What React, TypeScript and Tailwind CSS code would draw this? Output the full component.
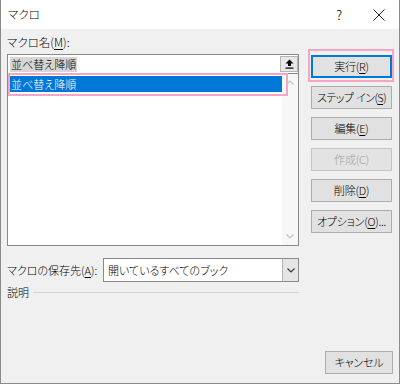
import React from "react";

const font = "font-['Noto_Sans_CJK_JP','Noto_Sans',sans-serif] [font-feature-settings:'palt'] whitespace-nowrap font-light";

function Btn({ children, disabled, def, tight }: { children: React.ReactNode; disabled?: boolean; def?: boolean; tight?: boolean }) {
  return (
    <div
      className={
        "h-[23px] w-full flex items-center justify-center text-[11px] leading-none " +
        (tight ? "tracking-[-0.6px] " : "tracking-[-0.2px] ") +
        (disabled
          ? "bg-[#e3e3e3] border border-[#c4c4c4] text-[#a0a0a0]"
          : def
          ? "bg-[#e1e1e1] border-2 border-[#0078d7] text-black"
          : "bg-[#e1e1e1] border border-[#adadad] text-black")
      }
    >
      {children}
    </div>
  );
}

const U = ({ children }: { children: React.ReactNode }) => <span className="underline underline-offset-2">{children}</span>;

export default function App() {
  return (
    <div className={"w-[400px] h-[384px] flex flex-col bg-[#f0f0f0] border-l border-r border-b border-[#8a8a8a] text-black " + font}>
      {/* title bar */}
      <div className="h-[29px] bg-white flex items-center pl-[7px] pr-[14px] shrink-0">
        <span className="text-[11.5px] leading-none">マクロ</span>
        <div className="flex-1" />
        <span className="text-[13px] leading-none mr-[31px]">?</span>
        <svg width="12" height="12" viewBox="0 0 12 12">
          <path d="M0.5 0.5 L11.5 11.5 M11.5 0.5 L0.5 11.5" stroke="#222" strokeWidth="1" />
        </svg>
      </div>

      {/* body */}
      <div className="flex-1 flex flex-col px-[6px] pt-[6px] pb-[9px]">
        <div className="flex gap-[12px]">
          {/* left */}
          <div className="w-[292px] flex flex-col">
            <div className="h-[14px] text-[11.5px] leading-[14px]">マクロ名(<U>M</U>):</div>
            {/* input */}
            <div className="mt-[5px] h-[20px] bg-white border border-[#8a8a8a] flex items-center pl-[2px]">
              <span className="bg-[#d6d6d6] text-[11px] leading-[15px] px-[1px]">並べ替え降順</span>
              <div className="flex-1" />
              <div className="w-[18px] h-[16px] bg-[#e8e8e8] border border-[#b5b5b5] flex items-center justify-center">
                <svg width="9" height="10" viewBox="0 0 9 10">
                  <path d="M4.5 0.5 L8.5 4.5 L6 4.5 L6 7 L3 7 L3 4.5 L0.5 4.5 Z" fill="#000" />
                  <rect x="0.5" y="8.5" width="8" height="1.2" fill="#000" />
                </svg>
              </div>
            </div>
            {/* list */}
            <div className="relative h-[172px] bg-white border-l border-r border-b border-[#8a8a8a] flex">
              <div className="flex-1 pt-[2px] pl-[2px]">
                <div className="h-[16px] bg-[#0078d7] text-white text-[11px] leading-[16px] pl-[1px]">並べ替え降順</div>
              </div>
              <div className="w-[16px] bg-[#f7f7f7] flex flex-col items-center justify-between py-[6px]">
                <svg width="8" height="5" viewBox="0 0 8 5">
                  <path d="M0.5 4.5 L4 1 L7.5 4.5" stroke="#c2c2c2" strokeWidth="1.2" fill="none" />
                </svg>
                <svg width="8" height="5" viewBox="0 0 8 5">
                  <path d="M0.5 0.5 L4 4 L7.5 0.5" stroke="#c2c2c2" strokeWidth="1.2" fill="none" />
                </svg>
              </div>
              <div className="absolute left-0 top-[-1px] w-[280px] h-[23px] border-2 border-[#f3a6c6] pointer-events-none" />
            </div>
            {/* save location */}
            <div className="mt-[12px] h-[24px] flex items-center">
              <span className="w-[96px] text-[11px] leading-none">マクロの保存先(<U>A</U>):</span>
              <div className="flex-1 h-[24px] bg-white border border-[#8a8a8a] flex items-center">
                <span className="pl-[4px] text-[11px] leading-none flex-1">開いているすべてのブック</span>
                <div className="w-[16px] h-full bg-[#e5e5e5] border-l border-[#b5b5b5] flex items-center justify-center">
                  <svg width="8" height="5" viewBox="0 0 8 5">
                    <path d="M0.5 0.5 L4 4 L7.5 0.5" stroke="#333" strokeWidth="1.1" fill="none" />
                  </svg>
                </div>
              </div>
            </div>
            <div className="mt-[3px] h-[14px] flex items-center">
              <span className="text-[11px] leading-none">説明</span>
              <div className="flex-1 ml-[4px] h-px bg-[#d5d5d5]" />
            </div>
          </div>

          {/* right */}
          <div className="w-[81px] pt-[20px] flex flex-col gap-[8px]">
            <div className="relative">
              <Btn def>実行(<U>R</U>)</Btn>
              <div className="absolute left-[-3px] right-[-2px] top-[-6px] bottom-[-4px] border-2 border-[#f3a6c6] pointer-events-none" />
            </div>
            <Btn tight>ステップ<span className="ml-[3px]">イン(<U>S</U>)</span></Btn>
            <Btn>編集(<U>E</U>)</Btn>
            <Btn disabled>作成(C)</Btn>
            <Btn>削除(<U>D</U>)</Btn>
            <Btn>オプション(<U>O</U>)...</Btn>
          </div>
        </div>
        <div className="flex-1" />
        <div className="flex justify-end">
          <div className="w-[68px]">
            <Btn>キャンセル</Btn>
          </div>
        </div>
      </div>
    </div>
  );
}
